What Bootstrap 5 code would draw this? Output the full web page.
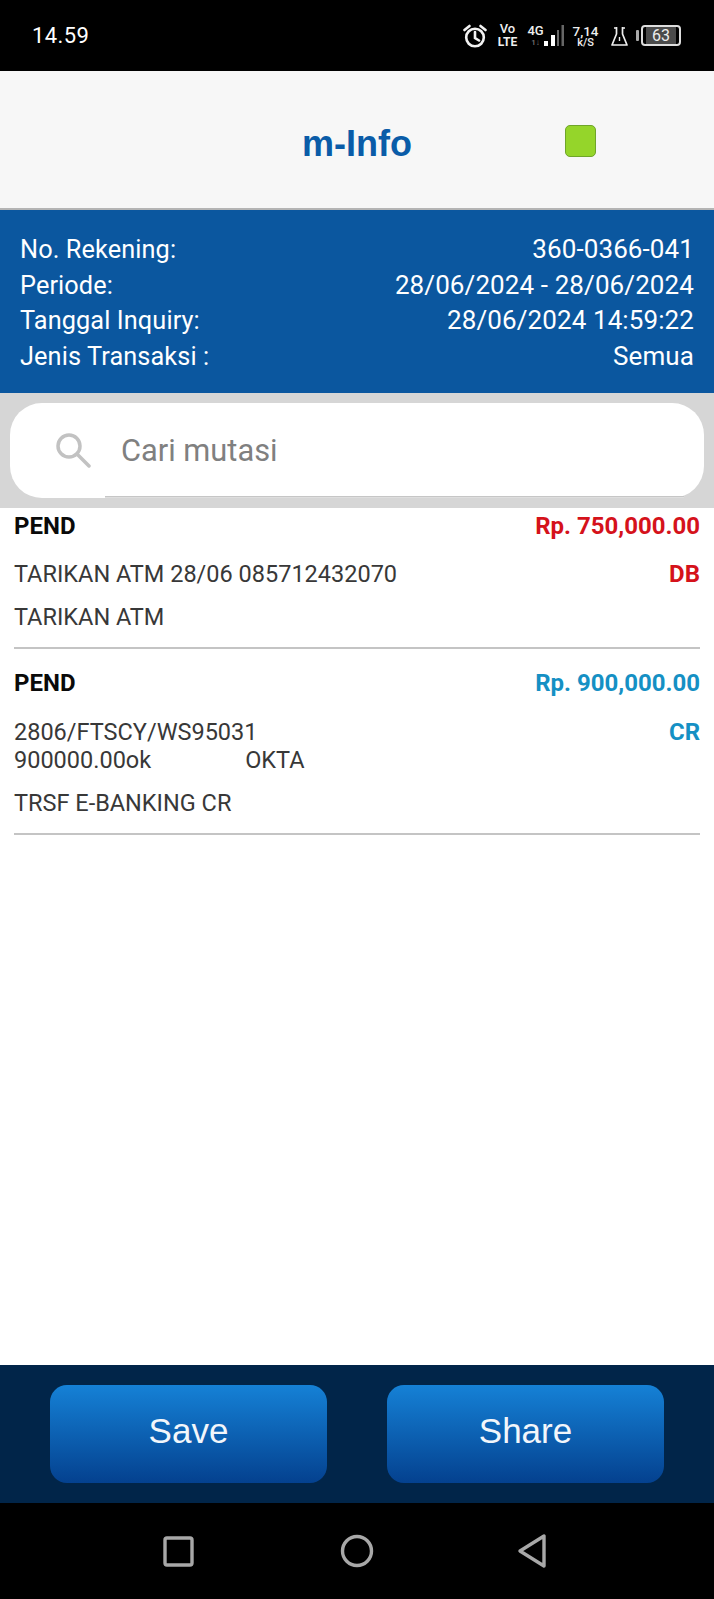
<!DOCTYPE html>
<html lang="id">
<head>
<meta charset="utf-8">
<title>m-Info</title>
<link href="https://cdn.jsdelivr.net/npm/bootstrap@5.3.0/dist/css/bootstrap.min.css" rel="stylesheet">
<style>
html,body{height:100%;margin:0}
body{font-family:Roboto,"Liberation Sans",sans-serif;background:#fff;width:714px;height:1599px;overflow:hidden}
.phone{height:1599px}
.sbar{height:71px;background:#000;color:#fff;padding:0 33px 0 32px;flex:none}
.clock{font-size:22px;line-height:1;letter-spacing:.4px}
.sicons{color:#eee}
.stack{font-weight:700;text-align:center;display:block;white-space:nowrap;flex:none}
.s-vo{width:21px;margin-left:10px;font-size:12px;line-height:12.5px}
.s-vo b{font-size:13px;font-weight:500;display:block;line-height:12.5px}
.s-4g{width:17px;margin-left:9px;font-size:13px;line-height:13px;font-weight:500}
.s-4g i{display:block;font-style:normal;font-size:8px;line-height:11px;color:#777}
.s-bars{margin-left:-1px;flex:none}
.s-sp{width:27px;margin-left:8px;font-size:13.5px;line-height:14px;font-weight:500}
.s-sp i{display:block;font-style:normal;font-size:11px;line-height:10px}
.s-fl{margin-left:12px;flex:none}
.batt{width:40px;height:21px;border:2px solid #ddd;border-radius:4px;font-size:16px;line-height:17px;text-align:center;background:linear-gradient(90deg,#000 8%,#4a4a4a 8%,#4a4a4a 92%,#000 92%);color:#eee;position:relative;margin-left:13px;flex:none}
.batt::before{content:"";position:absolute;left:-7px;top:3px;width:3px;height:11px;background:#aaa;border-radius:1px}
.apphead{height:139px;background:#f7f7f7;border-bottom:2px solid #b4b4b4;flex:none;position:relative}
.apptitle{font-family:"Liberation Sans",sans-serif;font-weight:700;font-size:36px;color:#0a5ca8;line-height:1;margin-top:8px}
.greenbox{position:absolute;left:565px;top:54px;width:31px;height:32px;background:#95d52a;border:1px solid #6fa52a;border-radius:5px}
.infob{background:#0b579f;color:#fff;height:183px;padding:22px 20px 0 20px;font-size:26px;letter-spacing:.1px;line-height:35.6px;flex:none}
.infokey{font-size:25.3px}
.searchw{background:#d6d6d6;height:115px;padding:10px 10px 10px 10px;flex:none}
.searchb{height:95px;background:#fff;border-radius:32px;position:relative;padding-left:111px;font-size:30.8px;color:#808080}
.searchb::after{content:"";position:absolute;left:95px;right:20px;bottom:0;height:2px;background:linear-gradient(#c6c6c6 50%,#dedede 50%)}
.searchb span{margin-top:2px}
.s-glass{position:absolute;left:45px;top:29px}
.lst{flex:1 1 auto;padding:0 14px}
.tx{border-bottom:2px solid #c4c4c4;color:#383838;font-size:23.5px;line-height:28px}
.tx1{height:141px;padding-top:4px}
.tx2{height:186px;padding-top:20px}
.lab{font-weight:700;color:#0a0a0a;font-size:24px}
.amt{font-weight:700;font-size:24px}
.red{color:#d5121b}
.teal{color:#1590c4}
.gap1{margin-top:21px}
.tx1 .gap1{margin-top:20px}
.gap2{margin-top:15px}
.okta{margin-left:94px}
.foot{height:138px;background:#012549;padding:20px 50px 20px 50px;flex:none;gap:60px}
.fbtn{width:277px;height:98px;border:0;border-radius:17px;color:#f2f6fb;font-family:"Liberation Sans",sans-serif;font-size:35px;padding-bottom:12px;background:linear-gradient(#1581d6,#04418f)}
.navb{height:96px;background:#000;flex:none;position:relative}
</style>
</head>
<body>
<div class="phone d-flex flex-column">
  <div class="sbar d-flex align-items-center justify-content-between">
    <span class="clock">14.59</span>
    <div class="sicons d-flex align-items-center">
      <svg width="24" height="24" viewBox="0 0 24 24" fill="none" stroke="#f2f2f2" stroke-width="2.6"><circle cx="12" cy="13.5" r="8.8"/><path d="M12 8v6l4 2.500M1.500 6l5-4M22.500 6l-5-4" stroke-linecap="round"/></svg>
      <span class="stack s-vo"><b>Vo</b>LTE</span>
      <span class="stack s-4g">4G<i>1↓</i></span>
      <svg class="s-bars" width="21" height="24" viewBox="0 0 21 24"><rect x="1" y="17" width="4" height="5" fill="#fff"/><rect x="8" y="11" width="4" height="11" fill="#fff"/><rect x="14" y="6" width="2" height="16" fill="#666"/><rect x="18.500" y="1" width="2.500" height="21" fill="#666"/></svg>
      <span class="stack s-sp">7,14<i>k/S</i></span>
      <svg class="s-fl" width="17" height="22" viewBox="0 0 17 22" fill="none" stroke="#eee" stroke-width="1.7"><path d="M3 3h2.500M11.500 3H14M5.500 2v7L1 20h15L11.500 9V2" stroke-linejoin="round"/><path d="M8.500 12v4" stroke-width="1.400"/></svg>
      <div class="batt">63</div>
    </div>
  </div>
  <div class="apphead d-flex align-items-center justify-content-center">
    <div class="apptitle">m-Info</div>
    <div class="greenbox"></div>
  </div>
  <div class="infob">
    <div class="d-flex justify-content-between"><span class="infokey">No. Rekening:</span><span>360-0366-041</span></div>
    <div class="d-flex justify-content-between"><span class="infokey">Periode:</span><span>28/06/2024 - 28/06/2024</span></div>
    <div class="d-flex justify-content-between"><span class="infokey">Tanggal Inquiry:</span><span>28/06/2024 14:59:22</span></div>
    <div class="d-flex justify-content-between"><span class="infokey">Jenis Transaksi :</span><span>Semua</span></div>
  </div>
  <div class="searchw">
    <div class="searchb d-flex align-items-center">
      <svg class="s-glass" width="36" height="36" viewBox="0 0 36 36" fill="none" stroke="#c2c2c2" stroke-width="3.5"><circle cx="14" cy="14" r="11"/><path d="M22 22l12 12" stroke-linecap="round"/></svg>
      <span>Cari mutasi</span>
    </div>
  </div>
  <div class="lst">
    <div class="tx tx1">
      <div class="d-flex justify-content-between"><span class="lab">PEND</span><span class="amt red">Rp. 750,000.00</span></div>
      <div class="d-flex justify-content-between gap1"><span>TARIKAN ATM 28/06 085712432070</span><span class="amt red">DB</span></div>
      <div class="gap2">TARIKAN ATM</div>
    </div>
    <div class="tx tx2">
      <div class="d-flex justify-content-between"><span class="lab">PEND</span><span class="amt teal">Rp. 900,000.00</span></div>
      <div class="d-flex justify-content-between gap1"><span>2806/FTSCY/WS95031<br>900000.00ok<span class="okta">OKTA</span></span><span class="amt teal">CR</span></div>
      <div class="gap2">TRSF E-BANKING CR</div>
    </div>
  </div>
  <div class="foot d-flex">
    <button type="button" class="btn fbtn">Save</button>
    <button type="button" class="btn fbtn">Share</button>
  </div>
  <div class="navb">
    <svg width="714" height="96" viewBox="0 0 714 96" fill="none" stroke="#a8a8a8" stroke-width="3.4" stroke-linejoin="round"><rect x="165" y="35" width="27" height="27" rx="2"/><circle cx="357" cy="48" r="14.5"/><path d="M544 33v30L520 48z"/></svg>
  </div>
</div>
<script src="https://cdn.jsdelivr.net/npm/bootstrap@5.3.0/dist/js/bootstrap.bundle.min.js"></script>
</body>
</html>
